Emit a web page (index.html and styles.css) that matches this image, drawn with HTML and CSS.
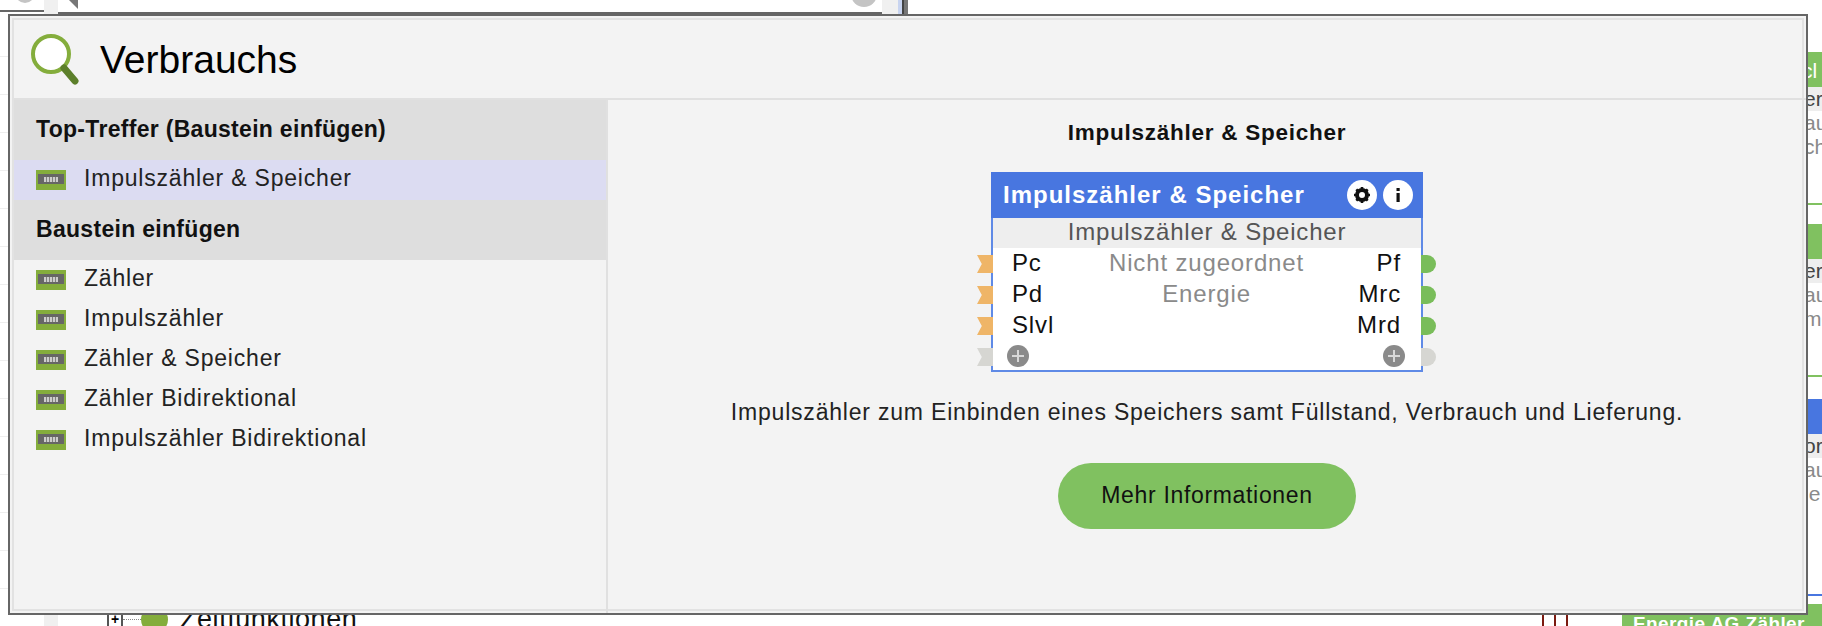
FILE: index.html
```html
<!DOCTYPE html>
<html lang="de">
<head>
    <meta charset="UTF-8">
    <title>Baustein suchen</title>
    <link rel="stylesheet" href="styles.css">
</head>
<body>
    <!-- window behind the search dialog -->
    <div class="backdrop">
        <div class="bg-knob bg-knob-1"></div>
        <div class="bg-knob bg-knob-2"></div>
        <div class="bg-wedge"></div>
        <div class="bg-left-rows"></div>
        <div class="bg-stripe"></div>
        <div class="bg-stripe bg-stripe-low"></div>
        <div class="bg-rule bg-rule-1"></div>
        <div class="bg-rule bg-rule-2"></div>
        <div class="bg-sash"></div>
        <div class="bg-tree-item">
            <span class="bg-expander">+</span>
            <span class="bg-dots"></span>
            <span class="bg-dot"></span>
            <span>Zeitfunktionen</span>
        </div>
        <div class="bg-card bg-card-1"><div class="bg-head">cl</div><div class="bg-sub">er</div><div class="bg-line">au</div><div class="bg-line">ch</div></div>
        <div class="bg-card bg-card-2"><div class="bg-head"></div><div class="bg-sub">er</div><div class="bg-line">au</div><div class="bg-line">me</div></div>
        <div class="bg-card bg-card-3"><div class="bg-head"></div><div class="bg-sub">or</div><div class="bg-line">au</div><div class="bg-line">ie</div></div>
        <div class="bg-bottom-head">Energie AG Zähler</div>
        <div class="bg-pins"><span></span><span></span><span></span></div>
    </div>

    <div class="dialog">
        <div class="search-bar">
            <svg class="search-icon" width="48" height="51" viewBox="0 0 48 51">
                <circle cx="20" cy="20" r="18" fill="#fff" stroke="#84ad3c" stroke-width="4"/>
                <path d="M33 34 L44 47" stroke="#5c7f2a" stroke-width="7" stroke-linecap="round"/>
            </svg>
            <span class="search-text">Verbrauchs</span>
        </div>
        <div class="content">
            <div class="results">
                <div class="group-title">Top-Treffer (Baustein einfügen)</div>
                <div class="result selected"><span class="chip"><span class="chip-inner"></span></span><span class="result-name">Impulszähler &amp; Speicher</span></div>
                <div class="group-title">Baustein einfügen</div>
                <div class="result"><span class="chip"><span class="chip-inner"></span></span><span class="result-name">Zähler</span></div>
                <div class="result"><span class="chip"><span class="chip-inner"></span></span><span class="result-name">Impulszähler</span></div>
                <div class="result"><span class="chip"><span class="chip-inner"></span></span><span class="result-name">Zähler &amp; Speicher</span></div>
                <div class="result"><span class="chip"><span class="chip-inner"></span></span><span class="result-name">Zähler Bidirektional</span></div>
                <div class="result"><span class="chip"><span class="chip-inner"></span></span><span class="result-name">Impulszähler Bidirektional</span></div>
            </div>
            <div class="detail">
                <h3 class="detail-title">Impulszähler &amp; Speicher</h3>
                <div class="block">
                    <div class="block-head">
                        <span class="block-name">Impulszähler &amp; Speicher</span>
                        <span class="round-btn">
                            <svg width="18" height="18" viewBox="0 0 18 18">
                                <circle cx="9" cy="9" r="5" fill="none" stroke="#111" stroke-width="4"/>
                                <path d="M9 1v3M9 14v3M1 9h3M14 9h3M3.3 3.3l2.2 2.2M12.5 12.5l2.2 2.2M3.3 14.7l2.2-2.2M12.5 5.5l2.2-2.2" stroke="#111" stroke-width="2.6"/>
                            </svg>
                        </span>
                        <span class="round-btn">
                            <svg width="18" height="18" viewBox="0 0 18 18">
                                <rect x="7.5" y="2" width="3.2" height="3" fill="#111"/>
                                <rect x="7.5" y="7" width="3.2" height="9" fill="#111"/>
                            </svg>
                        </span>
                    </div>
                    <div class="block-sub">Impulszähler &amp; Speicher</div>
                    <div class="block-row">
                        <span class="pin-in"></span><span class="port">Pc</span><span class="mid">Nicht zugeordnet</span><span class="port right">Pf</span><span class="pin-out"></span>
                    </div>
                    <div class="block-row">
                        <span class="pin-in"></span><span class="port">Pd</span><span class="mid">Energie</span><span class="port right">Mrc</span><span class="pin-out"></span>
                    </div>
                    <div class="block-row">
                        <span class="pin-in"></span><span class="port">Slvl</span><span class="mid"></span><span class="port right">Mrd</span><span class="pin-out"></span>
                    </div>
                    <div class="block-row add-row">
                        <span class="pin-in off"></span><span class="plus"></span><span class="mid"></span><span class="plus"></span><span class="pin-out off"></span>
                    </div>
                </div>
                <p class="detail-text">Impulszähler zum Einbinden eines Speichers samt Füllstand, Verbrauch und Lieferung.</p>
                <a class="more-btn">Mehr Informationen</a>
            </div>
        </div>
    </div>
</body>
</html>
```

FILE: styles.css
```css
* {
    box-sizing: border-box;
}
html, body {
    margin: 0;
    height: 100%;
    overflow: hidden;
}
body {
    position: relative;
    width: 1822px;
    height: 626px;
    background-color: white;
    font-family: "Liberation Sans", Arial, sans-serif;
    color: #111;
}

/* window behind the dialog */
.backdrop {
    position: absolute;
    inset: 0;
    overflow: hidden;
}
.bg-knob {
    position: absolute;
    border-radius: 50%;
    background-color: #c4c4c4;
}
.bg-knob-1 {
    left: 15px;
    top: -17px;
    width: 20px;
    height: 20px;
}
.bg-knob-2 {
    left: 851px;
    top: -19px;
    width: 26px;
    height: 26px;
}
.bg-wedge {
    position: absolute;
    left: 69px;
    top: 0;
    width: 9px;
    height: 9px;
    background-color: #777;
    clip-path: polygon(0 0, 100% 0, 100% 100%);
}
.bg-left-rows {
    position: absolute;
    left: 0;
    top: 19px;
    width: 8px;
    height: 596px;
    background: repeating-linear-gradient(to bottom, #fff 0 37px, #eee 37px 38px);
}
.bg-stripe {
    position: absolute;
    left: 44px;
    top: 0;
    width: 14px;
    height: 14px;
    background-color: #f0f0f0;
}
.bg-stripe-low {
    top: 615px;
    height: 11px;
}
.bg-rule {
    position: absolute;
    height: 2px;
    background-color: #666;
}
.bg-rule-1 {
    left: 0;
    top: 10px;
    width: 44px;
}
.bg-rule-2 {
    left: 58px;
    top: 12px;
    width: 824px;
}
.bg-sash {
    position: absolute;
    left: 882px;
    top: 0;
    width: 28px;
    height: 14px;
    background: linear-gradient(to right, #f0f0f0 0 16px, #c8d4f0 16px 20px, #444 20px 22px, #777 22px 26px, #fff 26px);
}
.bg-tree-item {
    position: absolute;
    left: 107px;
    top: 604px;
    display: flex;
    align-items: center;
    font-size: 27px;
    letter-spacing: 0.55px;
}
.bg-expander {
    width: 16px;
    height: 16px;
    border: 2px solid #555;
    font-size: 14px;
    font-weight: bold;
    line-height: 11px;
    text-align: center;
    letter-spacing: 0;
    color: #000;
}
.bg-dots {
    width: 18px;
    border-top: 1px dotted #888;
}
.bg-dot {
    width: 27px;
    height: 27px;
    margin-right: 12px;
    border-radius: 50%;
    background-color: #84ad3c;
}
.bg-card {
    position: absolute;
    left: 1780px;
    width: 60px;
    font-size: 21px;
    padding-left: 24px;
    color: #8a8a8a;
    line-height: 24px;
}
.bg-head {
    height: 35px;
    margin-left: -24px;
    padding-left: 22px;
    line-height: 38px;
    background-color: #80c160;
    color: white;
}
.bg-sub {
    background-color: #eee;
    margin-left: -24px;
    padding-left: 24px;
    color: #444;
}
.bg-line {
    height: 24px;
}
.bg-card-1 {
    top: 52px;
    height: 153px;
    border-bottom: 2px solid #80c160;
}
.bg-card-2 {
    top: 224px;
    height: 153px;
    border-bottom: 2px solid #80c160;
}
.bg-card-3 {
    top: 399px;
    height: 197px;
    border-bottom: 2px solid #4876e0;
}
.bg-card-3 .bg-head {
    background-color: #4876e0;
}
.bg-bottom-head {
    position: absolute;
    left: 1622px;
    top: 604px;
    width: 200px;
    height: 22px;
    padding: 9px 0 0 11px;
    background-color: #80c160;
    color: white;
    font-size: 19px;
    font-weight: bold;
    letter-spacing: 0.4px;
    white-space: nowrap;
    overflow: hidden;
}
.bg-pins {
    position: absolute;
    left: 1542px;
    top: 600px;
    height: 26px;
    display: flex;
    gap: 10px;
}
.bg-pins span {
    width: 2px;
    background-color: #7b1a10;
}

/* search dialog */
.dialog {
    position: absolute;
    left: 8px;
    top: 14px;
    width: 1800px;
    height: 601px;
    display: flex;
    flex-direction: column;
    background-color: #f3f3f3;
    border: 2px solid #666;
    padding: 4px 0 0 4px;
    box-shadow: inset 0 0 0 2px #f3f3f3, inset 0 0 0 4px #e2e2e2;
}
.search-bar {
    height: 80px;
    flex: none;
    display: flex;
    align-items: center;
    padding-left: 17px;
    border-bottom: 2px solid #e0e0e0;
}
.search-icon {
    flex: none;
}
.search-text {
    margin: 2px 0 0 21px;
    font-size: 39px;
    color: #000;
}
.content {
    flex: 1;
    display: flex;
    min-height: 0;
}
.results {
    width: 594px;
    flex: none;
    border-right: 2px solid #e0e0e0;
    font-size: 23px;
}
.group-title {
    height: 60px;
    padding-left: 22px;
    line-height: 58px;
    font-weight: bold;
    letter-spacing: 0.3px;
    background-color: #dedede;
    color: #111;
}
.result {
    height: 40px;
    display: flex;
    align-items: center;
    padding-left: 22px;
    color: #222;
}
.result.selected {
    background-color: #dcdcf2;
}
.result-name {
    margin-bottom: 3px;
    letter-spacing: 0.8px;
}
.chip {
    width: 30px;
    height: 20px;
    margin-right: 18px;
    padding: 4px 2px 6px;
    background-color: #84ad3c;
    flex: none;
}
.chip-inner {
    display: flex;
    justify-content: center;
    align-items: center;
    height: 10px;
    background-color: #666;
}
.chip-inner::before {
    content: "";
    width: 14px;
    height: 5px;
    background: repeating-linear-gradient(to right, #ccc 0 2px, #808080 2px 3px);
}
.detail {
    flex: 1;
    display: flex;
    flex-direction: column;
    align-items: center;
}
.detail-title {
    margin: 19px 0 0;
    font-size: 22.5px;
    line-height: 28px;
    font-weight: bold;
    letter-spacing: 0.75px;
    color: #111;
}
.block {
    width: 432px;
    height: 200px;
    margin-top: 25px;
    background-color: white;
    border: 2px solid #5f8ae6;
    border-top: none;
}
.block-head {
    height: 46px;
    margin: 0 -2px;
    padding: 0 10px 0 12px;
    display: flex;
    align-items: center;
    gap: 6px;
    background-color: #4876e0;
    color: white;
}
.block-name {
    flex: 1;
    font-size: 24px;
    font-weight: bold;
    letter-spacing: 1px;
}
.round-btn {
    width: 30px;
    height: 30px;
    border-radius: 50%;
    background-color: white;
    display: flex;
    align-items: center;
    justify-content: center;
}
.block-sub {
    height: 30px;
    line-height: 27px;
    text-align: center;
    font-size: 24px;
    letter-spacing: 0.8px;
    background-color: #eeeeee;
    color: #555;
}
.block-row {
    position: relative;
    height: 31px;
    display: flex;
    align-items: center;
    padding: 0 20px 2px 19px;
    font-size: 24px;
    letter-spacing: 0.85px;
}
.port {
    width: 60px;
    color: #111;
}
.port.right {
    text-align: right;
}
.mid {
    flex: 1;
    text-align: center;
    color: #8a8a8a;
}
.pin-in {
    position: absolute;
    left: -16px;
    top: 7px;
    width: 16px;
    height: 18px;
    background-color: #efb567;
    clip-path: polygon(0 0, 100% 0, 100% 100%, 0 100%, 30% 50%);
}
.pin-out {
    position: absolute;
    right: -15px;
    top: 7px;
    width: 15px;
    height: 18px;
    background-color: #79bd5a;
    border-radius: 0 9px 9px 0;
}
.pin-in.off, .pin-out.off {
    background-color: #d6d6d2;
}
.add-row {
    padding: 0 16px 2px 14px;
}
.plus {
    position: relative;
    width: 22px;
    height: 22px;
    flex: none;
    border-radius: 50%;
    background: linear-gradient(#d8d8d8, #d8d8d8) center / 12px 2px no-repeat,
                linear-gradient(#d8d8d8, #d8d8d8) center / 2px 12px no-repeat,
                #8a8a8a;
}
.detail-text {
    margin: 25px 0 0;
    font-size: 23px;
    line-height: 30px;
    letter-spacing: 0.8px;
    color: #222;
}
.more-btn {
    margin-top: 36px;
    width: 298px;
    height: 66px;
    border-radius: 33px;
    background-color: #80c160;
    color: #111;
    font-size: 23px;
    line-height: 65px;
    letter-spacing: 0.67px;
    text-align: center;
}
```
